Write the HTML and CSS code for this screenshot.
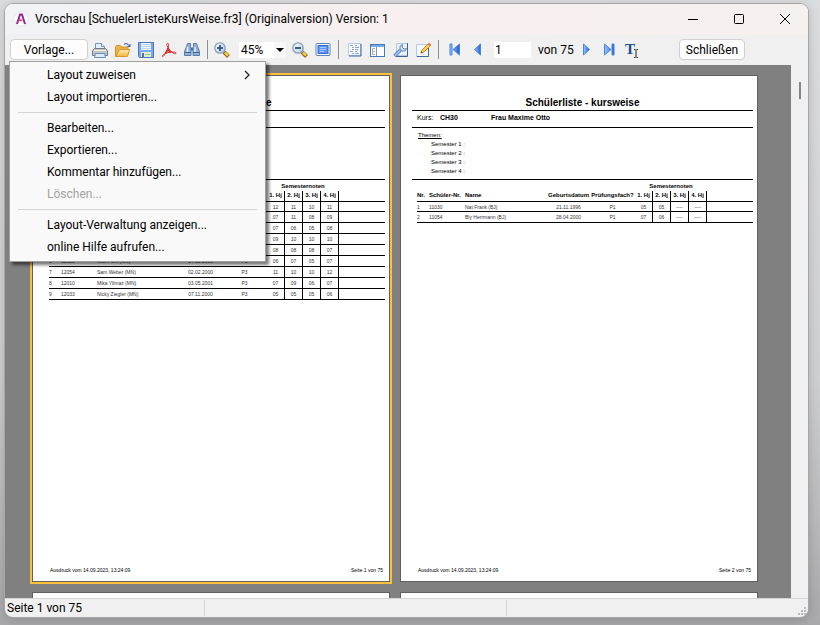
FILE: index.html
```html
<!DOCTYPE html>
<html lang="de">
  <head>
    <meta charset="UTF-8" />
    <meta name="viewport" content="width=device-width, initial-scale=1.0" />
    <title>Vorschau</title>
    <link rel="stylesheet" href="styles.css">
  </head>
  <body>
    <div class="window">
      <header class="titlebar">
        <svg class="logo" width="16" height="16" viewBox="0 0 16 16">
          <path d="M4 1h8l4 7-4 7H4L0 8z" fill="#fff" stroke="#e4e1e6" />
          <path d="M4 13L7 3.5h2L12 13" fill="none" stroke="#93278f" stroke-width="2" />
          <path d="M4 10.5c2-2 4-2 5-.5" fill="none" stroke="#d0388a" stroke-width="1.5" />
        </svg>
        <h1>Vorschau [SchuelerListeKursWeise.fr3] (Originalversion) Version: 1</h1>
        <div class="controls">
          <button aria-label="Minimieren"><svg width="12" height="12"><path d="M1 6.5h10" /></svg></button>
          <button aria-label="Maximieren"><svg width="12" height="12"><rect x="1.5" y="1.5" width="9" height="9" rx="1" /></svg></button>
          <button aria-label="Fenster schließen"><svg width="12" height="12"><path d="M1 1l10 10M11 1L1 11" /></svg></button>
        </div>
      </header>

      <div class="toolbar">
        <svg class="defs" width="0" height="0">
          <linearGradient id="blau" x2="1">
            <stop offset="0" stop-color="#9cc8ff" />
            <stop offset="1" stop-color="#1c5fd6" />
          </linearGradient>
          <linearGradient id="ordner" x2="0" y2="1">
            <stop offset="0" stop-color="#fff0b8" />
            <stop offset="1" stop-color="#f2b33c" />
          </linearGradient>
          <linearGradient id="glas" x2="1" y2="1">
            <stop offset="0" stop-color="#ffffff" />
            <stop offset="1" stop-color="#a9cdf3" />
          </linearGradient>
        </svg>
        <div class="dropdown">
          <button class="btn vorlage">Vorlage...</button>
          <ul class="menu">
            <li><button>Layout zuweisen
              <svg width="6" height="10"><path d="M1 1l4 4-4 4" fill="none" stroke="#222" stroke-width="1.3" /></svg></button></li>
            <li><button>Layout importieren...</button></li>
            <li class="line"></li>
            <li><button>Bearbeiten...</button></li>
            <li><button>Exportieren...</button></li>
            <li><button>Kommentar hinzufügen...</button></li>
            <li><button disabled>Löschen...</button></li>
            <li class="line"></li>
            <li><button>Layout-Verwaltung anzeigen...</button></li>
            <li><button>online Hilfe aufrufen...</button></li>
          </ul>
        </div>

        <div class="tools files">
          <button aria-label="Drucken">
            <svg width="16" height="16" viewBox="0 0 16 16">
              <path d="M3.5 7V1.5h6l3 3V7" fill="#e3f0fd" stroke="#6f93bd" />
              <path d="M9.500 1.500v3h3" fill="#fff" stroke="#6f93bd" />
              <path d="M2.500 6.500h11l2 2v5H.5v-5z" fill="#c3c4c6" stroke="#77797d" />
              <path d="M2 8.500h12" stroke="#f2f2f2" />
              <path d="M3.500 11.500h9l1 4h-11z" fill="#dcebfb" stroke="#6b91bd" />
            </svg>
          </button>
          <button aria-label="Öffnen">
            <svg width="16" height="16" viewBox="0 0 16 16">
              <path d="M.5 14.500V4.500l1-1h4l1 1.500h6.500v3" fill="#e9b348" stroke="#cf9330" />
              <path d="M.5 14.500h12l2-7h-10l-1.500 3z" fill="url(#ordner)" stroke="#d8982d" />
              <path d="M9 2.500c1.500-1.500 3.500-1 4.500.8" fill="none" stroke="#5b7ba5" stroke-width="1.200" />
              <path d="M15.500 1.500v3.500h-3.500z" fill="#47658f" />
            </svg>
          </button>
          <button aria-label="Speichern">
            <svg width="16" height="16" viewBox="0 0 16 16">
              <path d="M.5.5h15v15h-14l-1-1z" fill="#7ba7ec" stroke="#4a76bd" />
              <rect x="3" y="1" width="10" height="7" fill="#edf5ff" />
              <path d="M3 2.500h10M3 4.500h10M3 6.500h10" stroke="#bcd5f5" />
              <rect x="3" y="10" width="10" height="5" fill="#dfeed2" />
              <rect x="4" y="11" width="2" height="4" fill="#4e70a8" />
              <path d="M7 12.500h5" stroke="#94c268" />
            </svg>
          </button>
          <button aria-label="Als PDF exportieren">
            <svg width="16" height="16" viewBox="0 0 16 16" fill="none" stroke="#dc2a2a">
              <path d="M6.500 1.500c2-.5 1 4-.5 7S2.500 15 1.500 14.500s1-2.500 4-3.500 8.500-1.500 9.500-.2-2.500 1.200-4.500-.8S6.500 5 6 3.500s0-1.900.5-2z" />
              <path d="M6.500 6c.5 2 1.500 3.500 3.500 4.500M4.500 11.500L6.500 8" stroke-width="1.800" />
            </svg>
          </button>
          <button aria-label="Suchen">
            <svg width="16" height="16" viewBox="0 0 16 16">
              <path d="M3.500 1.500h3v3l.5 2v7H.5v-4l2-5z" fill="#8fb1d8" stroke="#587ba8" />
              <path d="M9.500 1.500h3l1 3 2 5v4H9v-7l.5-2z" fill="#8fb1d8" stroke="#587ba8" />
              <path d="M7 5.500h2v3H7z" fill="#4a6c99" />
              <path d="M3.500 5v5M11 5v5" stroke="#e3f0ff" stroke-width="1.500" />
              <path d="M1 10.500h6M9 10.500h6" stroke="#3f628f" />
            </svg>
          </button>
        </div>
        <span class="bar"></span>

        <button class="zoom-in" aria-label="Vergrößern">
          <svg width="16" height="16" viewBox="0 0 16 16">
            <path d="M10 10l4.500 4.500" stroke="#8d6a2c" stroke-width="4" />
            <path d="M11 10.500l3 3" stroke="#f8c93f" stroke-width="2.500" />
            <circle cx="6" cy="6" r="5.200" fill="url(#glas)" stroke="#8c9cb5" stroke-width="1.300" />
            <path d="M3 6h6M6 3v6" stroke="#3f5b88" stroke-width="2" />
          </svg>
        </button>
        <div class="scale"><select aria-label="Zoom"><option>45%</option></select></div>
        <button class="zoom-out" aria-label="Verkleinern">
          <svg width="16" height="16" viewBox="0 0 16 16">
            <path d="M10 10l4.500 4.500" stroke="#8d6a2c" stroke-width="4" />
            <path d="M11 10.500l3 3" stroke="#f8c93f" stroke-width="2.500" />
            <circle cx="6" cy="6" r="5.200" fill="url(#glas)" stroke="#8c9cb5" stroke-width="1.300" />
            <path d="M3 6h6" stroke="#3f5b88" stroke-width="2" />
          </svg>
        </button>
        <button class="full" aria-label="Vollbild">
          <svg width="16" height="16" viewBox="0 0 16 16">
            <rect x="1" y="1.500" width="14" height="12" rx="1" fill="#fff" stroke="#5b83bd" />
            <rect x="3" y="3.500" width="10" height="8" fill="#5e94f5" stroke="#3769ca" />
            <path d="M5 5.500h6M5 7.500h6M5 9.500h4" stroke="#a9c8fb" />
          </svg>
        </button>
        <span class="bar"></span>

        <div class="tools views">
          <button aria-label="Gliederung">
            <svg width="16" height="16" viewBox="0 0 16 16">
              <path d="M1.500 1.500h12v12h-12z" fill="#f3f8ff" stroke="#b9cce6" />
              <path d="M14 2v12H2" fill="none" stroke="#3a659f" />
              <path d="M3 3.500h3M5 5.500h2M5 7.500h2M3 9.500h3M5 11.500h2M8 3.500h2M8 5.500h4M8 7.500h3M8 9.500h2M8 11.500h4" stroke="#8fa9cf" />
            </svg>
          </button>
          <button aria-label="Miniaturen">
            <svg width="16" height="16" viewBox="0 0 16 16">
              <rect x=".5" y="2.500" width="14" height="12" fill="#fff" stroke="#4a79b9" />
              <path d="M1 4h13" stroke="#75a8ec" stroke-width="2" />
              <path d="M6.500 5v9" stroke="#7999c5" />
              <path d="M5 6.500H2.500v6H5M3 9.500h2" fill="none" stroke="#a3abb6" />
            </svg>
          </button>
          <button aria-label="Seiteneinstellungen">
            <svg width="16" height="16" viewBox="0 0 16 16">
              <path d="M3.500 1.500h11v12h-11z" fill="#eaf2fc" stroke="#b3c6e1" />
              <path d="M14.500 1v13.500H3" fill="none" stroke="#3f6399" />
              <path d="M1.500 14l6-6" stroke="#5c8ace" stroke-width="3.500" />
              <path d="M2 13.500l6-6" stroke="#a9caf5" stroke-width="1.500" />
              <path d="M9.500 2.500L7 4v3.500L9 9h3l1.500-2.500-2.500.5-1.500-1.500z" fill="#c7d8ec" stroke="#6f8cb4" />
            </svg>
          </button>
          <button aria-label="Seite bearbeiten">
            <svg width="16" height="16" viewBox="0 0 16 16">
              <path d="M.5 2.500h12v12H.5z" fill="#f4f9ff" stroke="#b3c8e6" />
              <path d="M12.500 6v8.500H1" fill="none" stroke="#3f68a3" />
              <path d="M5 11l1-3 6.500-6.500 2 2L8 10z" fill="#ffca4b" stroke="#cf8f2b" />
              <path d="M12.500 1.500l2 2" stroke="#df784b" stroke-width="2" />
              <path d="M4.500 11.500l1-2 1 1z" fill="#333" />
            </svg>
          </button>
        </div>
        <span class="bar"></span>

        <div class="pager">
          <button aria-label="Erste Seite"><svg width="12" height="13" viewBox="0 0 12 13"><path d="M1 1h2v11H1zM10.500 1v11L4 6.500z" /></svg></button>
          <button aria-label="Vorherige Seite"><svg width="9" height="13" viewBox="0 0 9 13"><path d="M7.500 1v11L1.500 6.500z" /></svg></button>
          <input type="text" value="1" aria-label="Seite" />
          <span class="total">von 75</span>
          <button aria-label="Nächste Seite"><svg width="9" height="13" viewBox="0 0 9 13"><path d="M1.500 1v11l6-5.500z" /></svg></button>
          <button aria-label="Letzte Seite"><svg width="12" height="13" viewBox="0 0 12 13"><path d="M9 1h2v11H9zM1.500 1v11L8 6.500z" /></svg></button>
        </div>
        <button class="text-tool" aria-label="Textauswahl"><b>T</b>
          <svg width="4" height="9"><path d="M0 .5h1.500M2.500 .5H4M2 1v7M0 8.500h1.500M2.500 8.500H4" stroke="#222" /></svg></button>
        <button class="btn close">Schließen</button>
      </div>

      <main class="viewer">
        <div class="pages">
          <article class="page selected">
            <h2>Schülerliste - kursweise</h2>
            <p class="kurs"></p>
            <div class="themen"></div>
            <table>
              <colgroup><col class="nr"><col class="snr"><col class="name"><col class="geb"><col class="pf"><col class="hj"><col class="hj"><col class="hj"><col class="hj"><col></colgroup>
              <thead>
                <tr><th colspan="5"></th><th colspan="4" class="noten">Semesternoten</th><th></th></tr>
                <tr><th></th><th></th><th></th><th></th><th></th><th>1. Hj</th><th>2. Hj</th><th>3. Hj</th><th>4. Hj</th><th></th></tr>
              </thead>
              <tbody>
                <tr><td></td><td></td><td></td><td></td><td></td><td>12</td><td>11</td><td>10</td><td>11</td><td></td></tr>
                <tr><td></td><td></td><td></td><td></td><td></td><td>07</td><td>11</td><td>08</td><td>09</td><td></td></tr>
                <tr><td></td><td></td><td></td><td></td><td></td><td>07</td><td>06</td><td>05</td><td>08</td><td></td></tr>
                <tr><td></td><td></td><td></td><td></td><td></td><td>09</td><td>10</td><td>10</td><td>10</td><td></td></tr>
                <tr><td></td><td></td><td></td><td></td><td></td><td>08</td><td>08</td><td>08</td><td>07</td><td></td></tr>
                <tr><td>6</td><td>12023</td><td>Max Pohl (MN)</td><td>14.02.2000</td><td>P3</td><td>06</td><td>07</td><td>05</td><td>07</td><td></td></tr>
                <tr><td>7</td><td>12054</td><td>Sam Weber (MN)</td><td>02.02.2000</td><td>P3</td><td>11</td><td>10</td><td>10</td><td>12</td><td></td></tr>
                <tr><td>8</td><td>12010</td><td>Mika Yilmaz (MN)</td><td>03.05.2001</td><td>P3</td><td>07</td><td>09</td><td>06</td><td>07</td><td></td></tr>
                <tr><td>9</td><td>12033</td><td>Nicky Ziegler (MN)</td><td>07.11.2000</td><td>P3</td><td>05</td><td>05</td><td>05</td><td>06</td><td></td></tr>
              </tbody>
            </table>
            <footer><span>Ausdruck vom 14.09.2023, 13:24:09</span><span>Seite 1 von 75</span></footer>
          </article>

          <article class="page">
            <h2>Schülerliste - kursweise</h2>
            <p class="kurs"><span>Kurs:</span> <b>CH30</b> <b>Frau Maxime Otto</b></p>
            <div class="themen">
              <h3>Themen:</h3>
              <p>Semester 1 :</p>
              <p>Semester 2 :</p>
              <p>Semester 3 :</p>
              <p>Semester 4 :</p>
            </div>
            <table>
              <colgroup><col class="nr"><col class="snr"><col class="name"><col class="geb"><col class="pf"><col class="hj"><col class="hj"><col class="hj"><col class="hj"><col></colgroup>
              <thead>
                <tr><th colspan="5"></th><th colspan="4" class="noten">Semesternoten</th><th></th></tr>
                <tr><th>Nr.</th><th>Schüler-Nr.</th><th>Name</th><th>Geburtsdatum</th><th>Prüfungsfach?</th><th>1. Hj</th><th>2. Hj</th><th>3. Hj</th><th>4. Hj</th><th></th></tr>
              </thead>
              <tbody>
                <tr><td>1</td><td>11030</td><td>Nat Frank (BJ)</td><td>21.11.1996</td><td>P1</td><td>05</td><td>05</td><td>----</td><td>----</td><td></td></tr>
                <tr><td>2</td><td>11054</td><td>Bly Herrmann (BJ)</td><td>28.04.2000</td><td>P1</td><td>07</td><td>06</td><td>----</td><td>----</td><td></td></tr>
              </tbody>
            </table>
            <footer><span>Ausdruck vom 14.09.2023, 13:24:09</span><span>Seite 2 von 75</span></footer>
          </article>

          <article class="page"></article>
          <article class="page"></article>
        </div>
        <div class="scrollbar"><span></span></div>
      </main>

      <footer class="status">
        <span>Seite 1 von 75</span>
        <span></span>
        <span></span>
        <svg class="grip" width="8" height="8"><path d="M6 0h2v2H6zM3 3h2v2H3zM6 3h2v2H6zM0 6h2v2H0zM3 6h2v2H3zM6 6h2v2H6z" fill="#b9b9b9" /></svg>
      </footer>
    </div>
  </body>
</html>
```

FILE: styles.css
```css
* {
  box-sizing: border-box;
}

body {
  margin: 0;
  height: 100vh;
  padding: 4px 12px 8px 5px;
  overflow: hidden;
  background: linear-gradient(#dcdddf, #cfd0d2 60%, #a9a9ab);
  font-family: Roboto, sans-serif;
  font-size: 12px;
  color: #000;
}

h1,
h2,
h3,
p,
ul {
  margin: 0;
  padding: 0;
  font-weight: 400;
}

button {
  display: flex;
  align-items: center;
  padding: 0;
  border: none;
  background: none;
  font: inherit;
  color: inherit;
}

svg {
  display: block;
  flex: none;
}

.window {
  height: 100%;
  display: flex;
  flex-direction: column;
  border-radius: 8px;
  overflow: hidden;
  background: #f0f0f0;
  box-shadow: 0 0 0 1px #a6a6a8, 0 2px 12px #0003;
}

/* title */
.titlebar {
  height: 30px;
  flex: none;
  display: flex;
  align-items: center;
  background: linear-gradient(90deg, #f1f3f6, #f8eff0 50%, #f5f1ef);
}

.logo {
  margin: 0 6px 0 8px;
}

.titlebar h1 {
  flex: 1;
  font-size: 12px;
}

.controls {
  display: flex;
}

.controls button {
  width: 46px;
  height: 30px;
  justify-content: center;
}

.controls svg {
  fill: none;
  stroke: #000;
}

/* toolbar */
.toolbar {
  height: 31px;
  flex: none;
  display: flex;
  align-items: center;
  padding-left: 5px;
}

.defs {
  position: absolute;
}

.btn {
  height: 21px;
  justify-content: center;
  border: 1px solid #d0d0d0;
  border-radius: 4px;
  background: #fdfdfd;
}

.vorlage {
  width: 78px;
}

.close {
  width: 66px;
  margin-left: 40px;
}

.dropdown {
  position: relative;
}

.menu {
  position: absolute;
  z-index: 1;
  top: 22px;
  left: -1px;
  width: 257px;
  padding: 2px 8px 3px;
  list-style: none;
  background: #f9f9f9;
  border: 1px solid #a0a0a0;
  box-shadow: 3px 3px 3px #0008;
}

.menu button {
  width: 100%;
  height: 22px;
  justify-content: space-between;
  padding: 0 7px 0 29px;
}

.menu button:disabled {
  color: #a3a3a3;
}

.menu .line {
  height: 1px;
  margin: 4px 0;
  background: #d5d5d5;
}

.tools {
  display: flex;
  gap: 7px;
}

.files {
  margin: 0 7px 0 4px;
}

.bar {
  width: 1px;
  height: 19px;
  background: #8d8d8d;
}

.zoom-in {
  margin: 0 9px 0 6px;
}

.scale {
  position: relative;
  width: 47px;
}

.scale select {
  display: block;
  width: 100%;
  height: 16px;
  padding: 0 0 0 2px;
  border: none;
  border-radius: 0;
  appearance: none;
  color: #000;
  font: inherit;
  background: linear-gradient(90deg, #fff 35px, #f7f7f7 35px);
}

.scale::after {
  content: "";
  position: absolute;
  top: 6px;
  right: 2px;
  border: 4px solid transparent;
  border-top-color: #000;
  border-bottom: none;
  pointer-events: none;
}

.zoom-out {
  margin: 0 7px 0 6px;
}

.full {
  margin-right: 7px;
}

.views {
  margin: 0 6px 0 8px;
}

.pager {
  display: flex;
  align-items: center;
  margin-left: 10px;
}

.pager svg {
  fill: url(#blau);
  stroke: #4a82da;
}

.pager button + button {
  margin-left: 12px;
}

.pager input {
  width: 37px;
  height: 16px;
  margin: 0 7px 0 12px;
  padding: 0 1px;
  border: none;
  font: inherit;
}

.total {
  width: 44px;
}

.text-tool {
  width: 14px;
  margin-left: 10px;
}

.text-tool b {
  width: 9px;
  font: bold 15px "Liberation Serif", serif;
  color: #174f8d;
}

.text-tool svg {
  align-self: flex-end;
}

/* preview */
.viewer {
  flex: 1;
  min-height: 0;
  display: flex;
}

.pages {
  flex: 1;
  display: flex;
  flex-wrap: wrap;
  align-content: flex-start;
  gap: 10px;
  padding: 10px 27px;
  overflow: hidden;
  background: #808080;
}

.page {
  width: 358px;
  height: 507px;
  flex: none;
  display: flex;
  flex-direction: column;
  padding: 20px 4px 7px 11px;
  border: 1px solid #606060;
  background: #fff;
  font-family: "Liberation Sans", Arial, sans-serif;
  font-size: 5px;
}

.selected {
  box-shadow: 0 0 0 2px #fbc03a;
}

.page h2 {
  font-size: 10px;
  line-height: 14px;
  font-weight: 700;
  text-align: center;
  border-bottom: 1px solid #000;
}

.kurs {
  display: flex;
  height: 17px;
  padding-left: 5px;
  font-size: 7px;
  line-height: 14px;
  border-bottom: 1px solid #000;
}

.kurs span {
  width: 23px;
}

.kurs b {
  width: 51px;
  white-space: nowrap;
}

.themen {
  height: 52px;
  padding: 3px 6px;
  font-size: 6px;
  line-height: 9px;
  border-bottom: 1px solid #000;
}

.themen h3 {
  font-size: 6px;
  text-decoration: underline;
}

.themen p {
  padding-left: 13px;
}

.page table {
  margin-left: 5px;
  table-layout: fixed;
  border-spacing: 0;
  line-height: 8px;
}

.nr {
  width: 12px;
}

.snr {
  width: 36px;
}

.name {
  width: 82px;
}

.geb {
  width: 43px;
}

.pf {
  width: 45px;
}

.hj {
  width: 18px;
}

th,
td {
  height: 11px;
  padding: 0;
  text-align: left;
  white-space: nowrap;
  border-bottom: 1px solid #000;
}

th {
  font-size: 6px;
  vertical-align: top;
}

td {
  color: #333;
}

thead tr:first-child th {
  vertical-align: middle;
  border: none;
}

tbody tr:first-child td {
  height: 10px;
}

td:nth-child(n + 4),
th:nth-child(n + 4),
.page .noten {
  text-align: center;
}

tr > :nth-child(n + 6):nth-child(-n + 9) {
  border-right: 1px solid #000;
}

.page footer {
  display: flex;
  justify-content: space-between;
  margin-top: auto;
  padding: 0 2px 0 6px;
  line-height: 8px;
}

.scrollbar {
  width: 17px;
  display: flex;
  justify-content: center;
  padding-top: 17px;
}

.scrollbar span {
  width: 2px;
  height: 17px;
  background: #858585;
}

/* status */
.status {
  height: 19px;
  flex: none;
  display: flex;
  align-items: center;
  border-top: 1px solid #d5d5d5;
}

.status span {
  width: 302px;
  height: 16px;
  line-height: 16px;
  padding-left: 2px;
  border-right: 1px solid #d5d5d5;
}

.status span:first-child {
  width: 200px;
}

.status span:nth-child(3) {
  flex: 1;
  border: none;
}

.grip {
  margin: 6px 2px 0 0;
}
```
